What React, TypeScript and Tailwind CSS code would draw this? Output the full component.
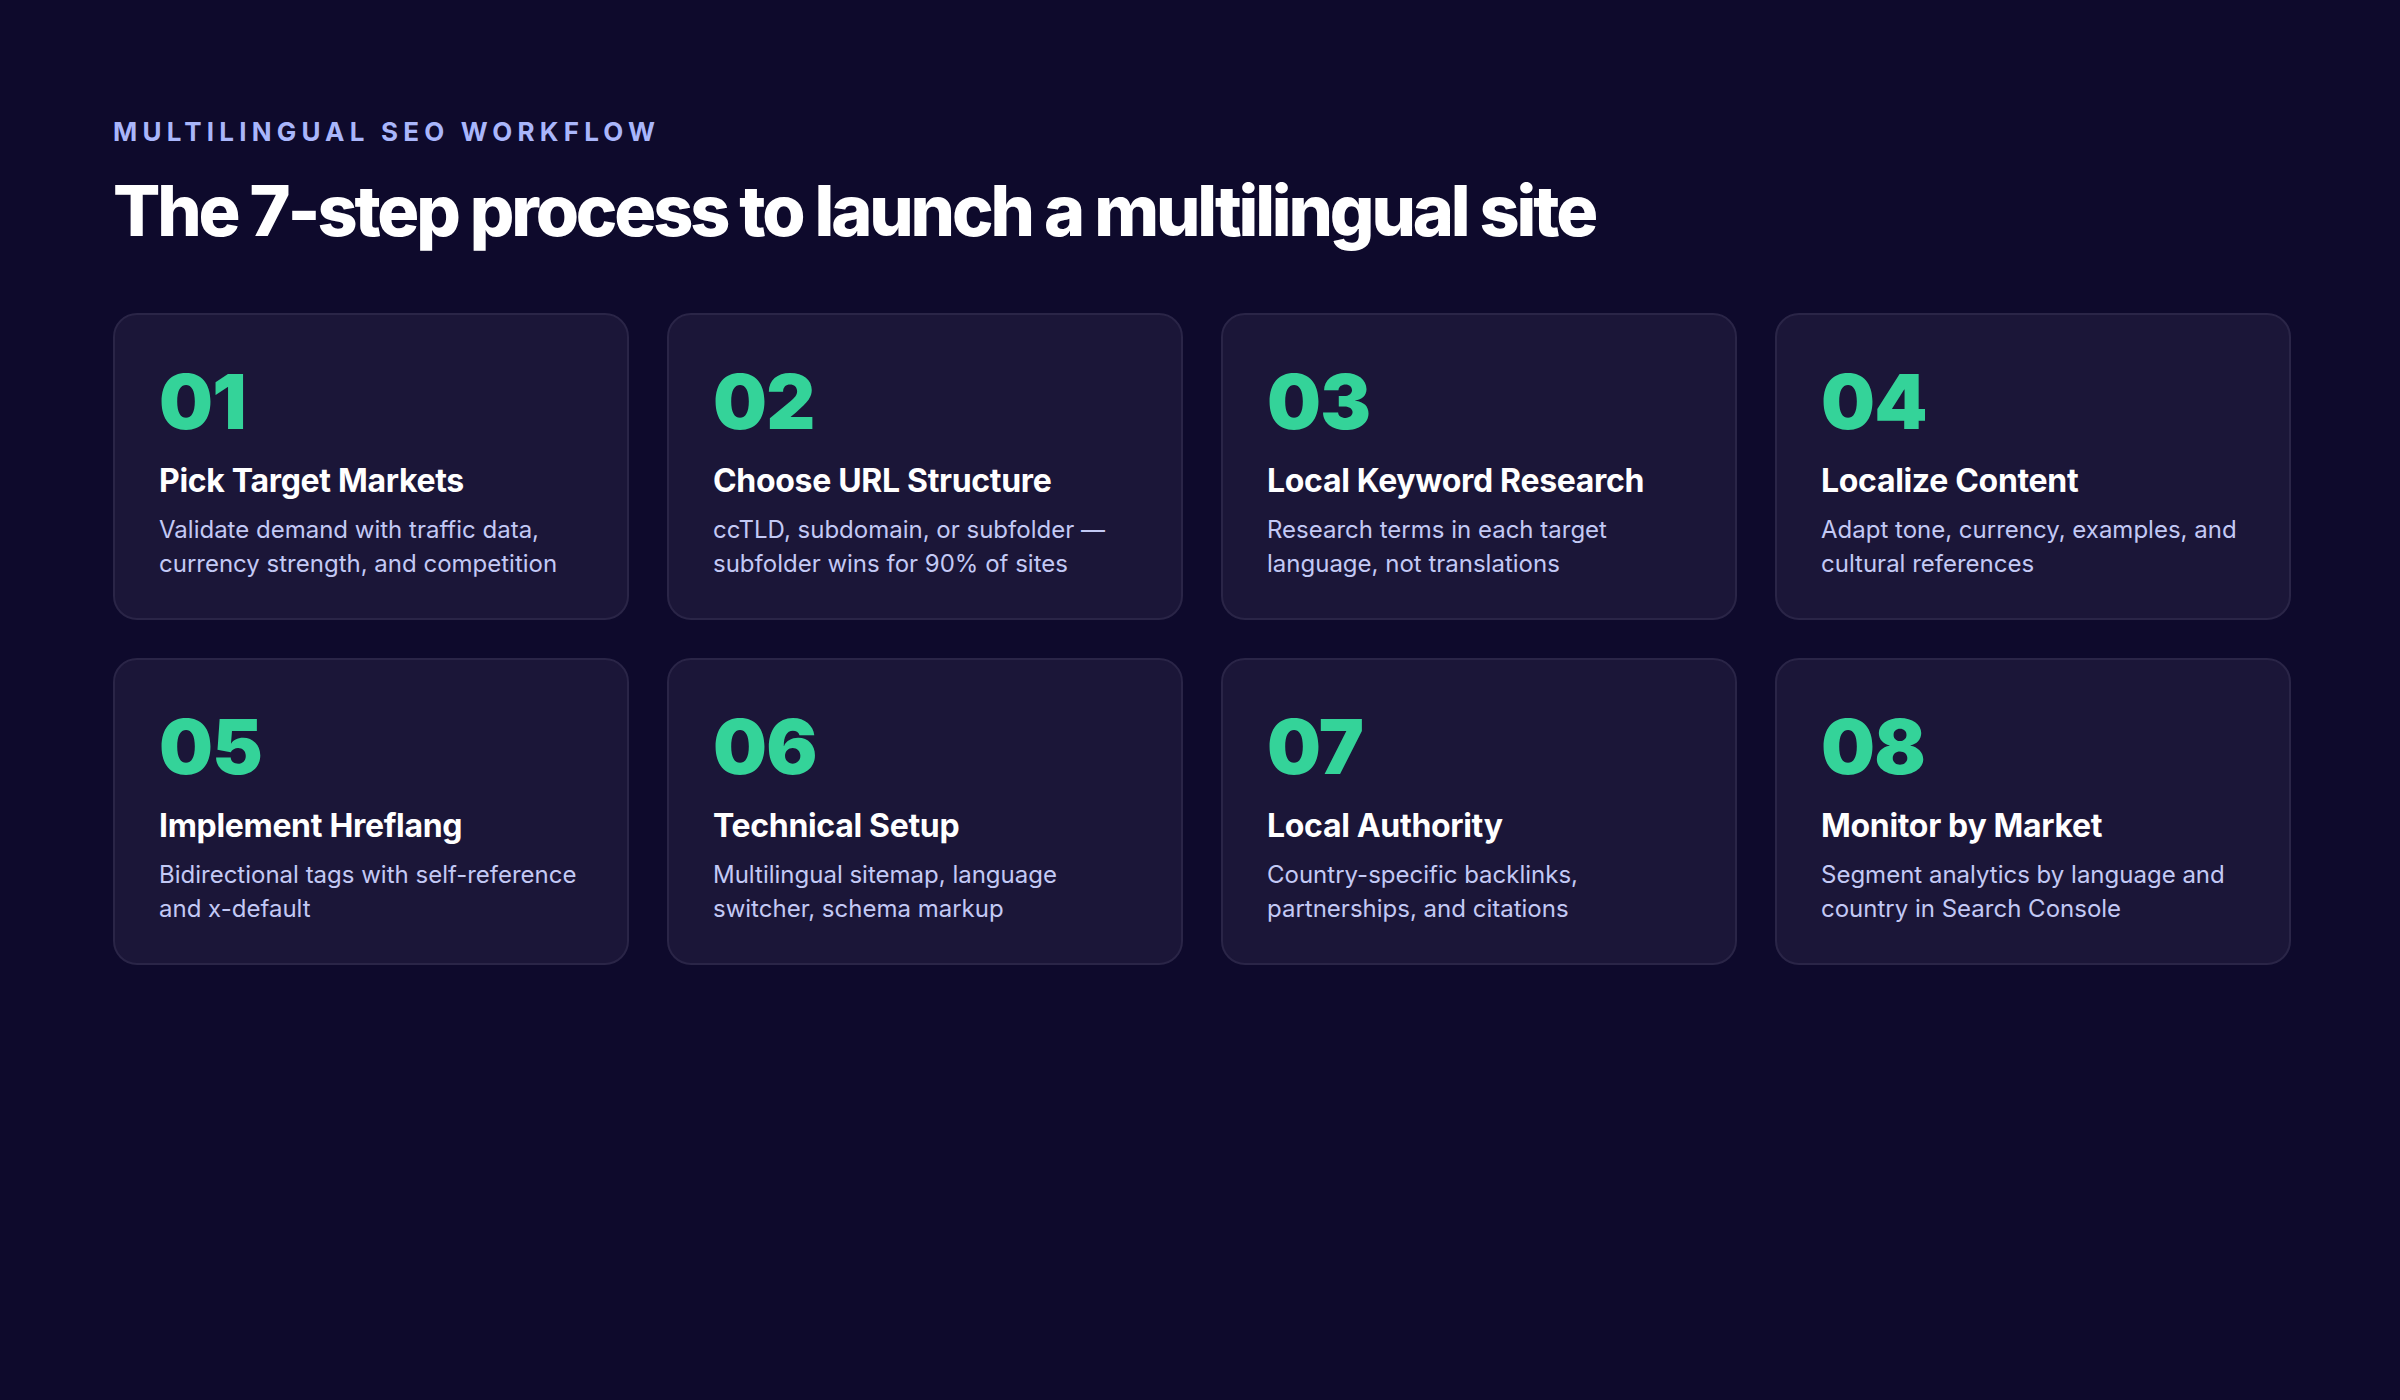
const steps = [
  ["01", "Pick Target Markets", "Validate demand with traffic data, currency strength, and competition"],
  ["02", "Choose URL Structure", "ccTLD, subdomain, or subfolder — subfolder wins for 90% of sites"],
  ["03", "Local Keyword Research", "Research terms in each target language, not translations"],
  ["04", "Localize Content", "Adapt tone, currency, examples, and cultural references"],
  ["05", "Implement Hreflang", "Bidirectional tags with self-reference and x-default"],
  ["06", "Technical Setup", "Multilingual sitemap, language switcher, schema markup"],
  ["07", "Local Authority", "Country-specific backlinks, partnerships, and citations"],
  ["08", "Monitor by Market", "Segment analytics by language and country in Search Console"],
];

export default function App() {
  return (
    <div
      className="min-h-[1400px] w-[2400px] bg-[#0e0a2c] px-[113px] pt-[112px]"
      style={{ fontFamily: "Inter, sans-serif" }}
    >
      <p className="text-[26px] font-bold uppercase tracking-[0.2em] text-[#a9b6fb]">
        Multilingual SEO Workflow
      </p>
      <h1 className="mt-[16px] text-[70px] font-extrabold leading-tight tracking-[-0.045em] text-white">
        The 7-step process to launch a multilingual site
      </h1>
      <div className="mt-[58px] grid w-[2178px] grid-cols-4 gap-[38px]">
        {steps.map(([num, title, desc]) => (
          <div
            key={num}
            className="h-[307px] rounded-[24px] border-2 border-[#2a2547] bg-[#1b1638] px-[44px] pt-[48px]"
          >
            <div className="text-[76px] font-black leading-none tracking-[-0.01em] text-[#34d399]">
              {num}
            </div>
            <h2 className="mt-[22px] text-[32px] font-bold leading-tight tracking-[-0.01em] text-white">{title}</h2>
            <p className="mt-[12px] text-[24px] leading-[34px] text-[#c3c9f5]">{desc}</p>
          </div>
        ))}
      </div>
    </div>
  );
}
